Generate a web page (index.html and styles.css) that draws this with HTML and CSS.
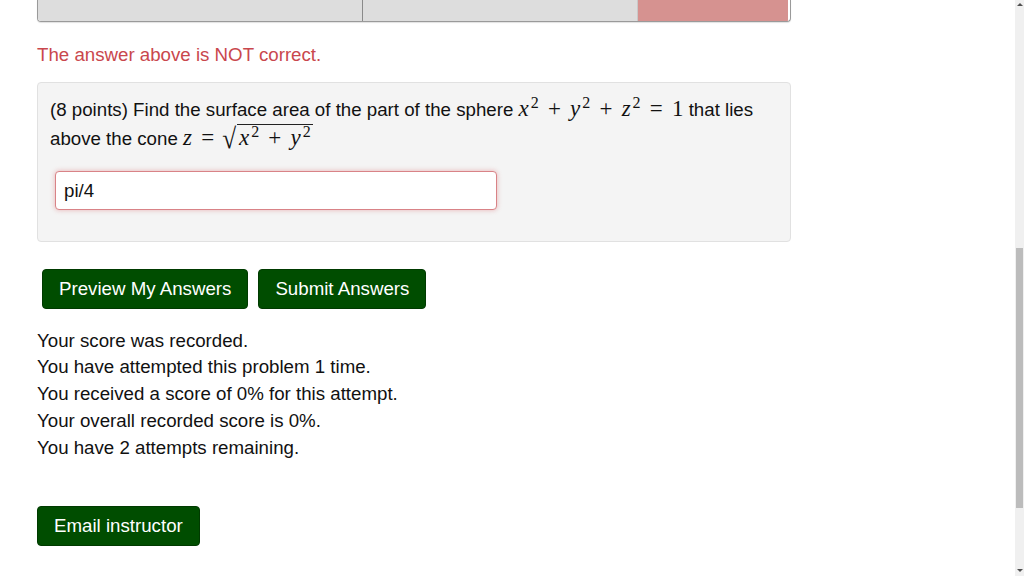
FILE: index.html
```html
<!DOCTYPE html>
<html lang="en">
<head>
<meta charset="utf-8">
<title>Problem</title>
<link rel="stylesheet" href="styles.css">
</head>
<body>
<div class="page">
  <div class="results-table">
    <div class="cell cell-a"></div>
    <div class="cell cell-b"></div>
    <div class="cell cell-c"></div>
  </div>

  <p class="error-msg">The answer above is NOT correct.</p>

  <div class="problem">
    <p class="problem-text">(8 points) Find the surface area of the part of the sphere <span class="math"><i>x</i><sup>2</sup><span class="op">+</span><i>y</i><sup>2</sup><span class="op">+</span><i>z</i><sup>2</sup><span class="op">=</span>1</span> that lies above the cone <span class="math"><i>z</i><span class="op">=</span><span class="sqrt"><span class="radical">√</span><span class="radicand"><i>x</i><sup>2</sup><span class="op">+</span><i>y</i><sup>2</sup></span></span></span></p>
    <div class="answer-input">pi/4</div>
  </div>

  <div class="actions">
    <button class="btn">Preview My Answers</button>
    <button class="btn">Submit Answers</button>
  </div>

  <div class="score">
    <div>Your score was recorded.</div>
    <div>You have attempted this problem 1 time.</div>
    <div>You received a score of 0% for this attempt.</div>
    <div>Your overall recorded score is 0%.</div>
    <div>You have 2 attempts remaining.</div>
  </div>

  <button class="btn btn-email">Email instructor</button>
</div>

<div class="scrollbar">
  <div class="arrow arrow-up"></div>
  <div class="thumb"></div>
  <div class="arrow arrow-down"></div>
</div>
</body>
</html>
```

FILE: styles.css
```css
html, body {
  margin: 0;
  padding: 0;
  background: #ffffff;
  overflow: hidden;
}

body {
  font-family: "Liberation Sans", Arial, sans-serif;
  font-size: 18.7px;
  line-height: 26.7px;
  color: #111111;
}

.page {
  width: 754px;
  padding-left: 37px;
}

.results-table {
  display: flex;
  height: 21px;
  border: 1px solid #9a9a9a;
  border-top: none;
  border-radius: 0 0 4px 4px;
  overflow: hidden;
  box-shadow: 0 1px 1px rgba(0, 0, 0, 0.12);
}

.cell {
  background: #dddddd;
}

.cell-a {
  width: 324px;
  border-right: 1px solid #8a8a8a;
}

.cell-b {
  width: 274px;
  border-right: 1px solid #c9c9c9;
}

.cell-c {
  flex: 1;
  background: #d69290;
  margin-right: 2px;
}

.error-msg {
  margin: 20px 0 0 0;
  color: #c9474d;
}

.problem {
  margin-top: 13px;
  background: #f4f4f4;
  border: 1px solid #e1e1e1;
  border-radius: 4px;
  padding: 12px 12px 31px 12px;
  height: 115px;
}

.problem-text {
  margin: 0;
  line-height: 28px;
  width: 728px;
}

.math {
  font-family: "Liberation Serif", "Times New Roman", serif;
  font-size: 23px;
  white-space: nowrap;
}

.math i {
  font-style: italic;
}

.math sup {
  font-style: normal;
  font-size: 16px;
  line-height: 0;
  vertical-align: 0.5em;
  margin-left: 2px;
}

.op {
  margin: 0 0.4em;
}

.sqrt {
  display: inline-block;
  white-space: nowrap;
}

.radical {
  display: inline-block;
  font-size: 23px;
  line-height: 20px;
  transform: scale(1.1, 1.25) translateY(1px);
  margin-right: 1px;
}

.radicand {
  display: inline-block;
  border-top: 1px solid #222;
  line-height: 20px;
  padding: 3px 2px 0 2px;
}

.answer-input {
  margin: 18px 0 0 5px;
  width: 432px;
  height: 37px;
  line-height: 37px;
  padding-left: 8px;
  background: #ffffff;
  border: 1px solid #d98387;
  border-radius: 4px;
  box-shadow: 0 0 5px rgba(214, 96, 100, 0.45);
}

.actions {
  display: flex;
  gap: 10px;
  margin: 27px 0 0 5px;
}

.btn {
  font-family: "Liberation Sans", Arial, sans-serif;
  font-size: 18.7px;
  color: #ffffff;
  background: #004d00;
  border: 1px solid #003a00;
  border-radius: 4px;
  height: 40px;
  padding: 0 16px;
  line-height: 38px;
  cursor: pointer;
}

.score {
  margin-top: 19px;
}

.btn-email {
  display: block;
  margin-top: 45px;
  height: 40px;
}

.scrollbar {
  position: fixed;
  top: 0;
  right: 0;
  width: 9px;
  height: 576px;
  background: #f0f0f0;
  display: flex;
  flex-direction: column;
  align-items: center;
}

.arrow {
  width: 0;
  height: 0;
  border-left: 3px solid transparent;
  border-right: 3px solid transparent;
}

.arrow-up {
  margin-top: 3px;
  border-bottom: 3px solid #505050;
}

.arrow-down {
  margin-top: auto;
  margin-bottom: 4px;
  border-top: 3px solid #505050;
}

.thumb {
  margin-top: 242px;
  width: 7px;
  height: 260px;
  background: #bcbcbc;
}
```
